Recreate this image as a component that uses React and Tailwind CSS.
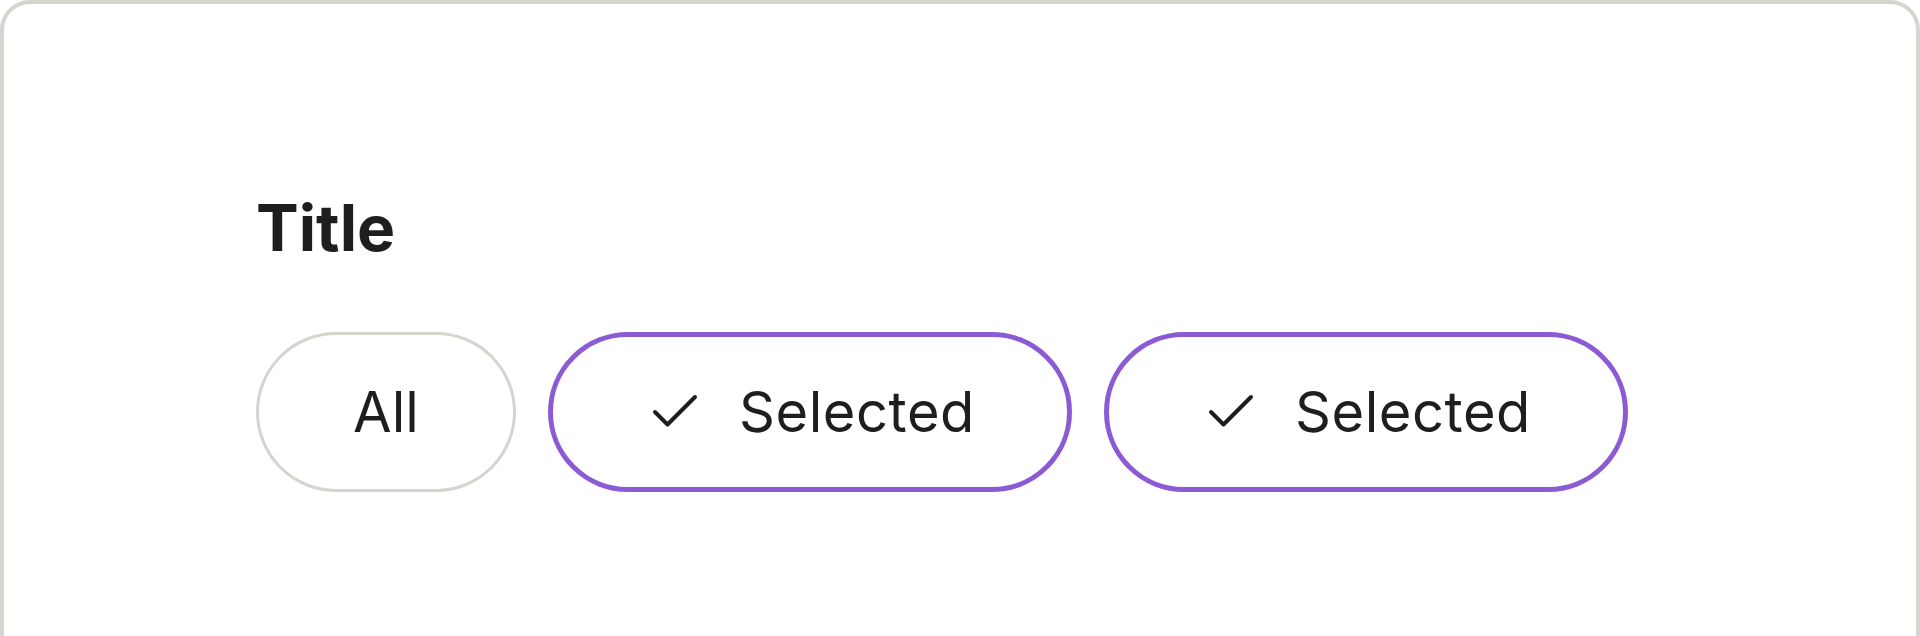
import React from 'react'

const chips = [
    { label: 'All', selected: false },
    { label: 'Selected', selected: true },
    { label: 'Selected', selected: true },
]

export default function App() {
    return (
        <div className="min-h-screen bg-white font-['Inter',sans-serif] text-[#1e1e1e]">
            {/* Card */}
            <div className="h-[720px] rounded-[30px] border-4 border-[#d5d4cd] pl-[252px] pt-[184px]">
                <h1 className="text-[64px] leading-[80px] font-bold">Title</h1>
                <div className="mt-16 flex gap-8">
                    {chips.map((chip, i) => (
                        <Chip key={i} {...chip} />
                    ))}
                </div>
            </div>
        </div>
    )
}

function Chip({ label, selected }) {
    if (!selected) {
        return (
            <button className="flex h-[160px] w-[260px] items-center justify-center rounded-full border-[3px] border-[#d5d4cd] bg-white text-[56px] leading-none font-normal">
                {label}
            </button>
        )
    }
    return (
        <button className="flex h-[160px] w-[524px] items-center justify-center gap-[34px] rounded-full border-[5px] border-[#8c5bd3] bg-white text-[56px] leading-none font-normal">
            <svg
                width="60"
                height="60"
                viewBox="0 0 24 24"
                fill="none"
                stroke="currentColor"
                strokeWidth="1.6"
                strokeLinecap="round"
                strokeLinejoin="round"
            >
                <path d="M20 6 9 17l-5-5" />
            </svg>
            <span className="tracking-[0.01em]">{label}</span>
        </button>
    )
}
